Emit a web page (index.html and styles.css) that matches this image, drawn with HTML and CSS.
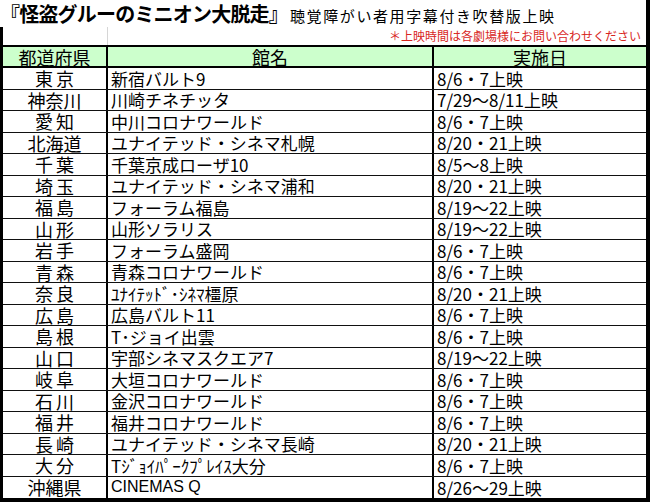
FILE: index.html
```html
<!DOCTYPE html>
<html lang="ja">
<head>
<meta charset="utf-8">
<link rel="stylesheet" href="styles.css">
</head>
<body>
<div class="sheet">
  <div class="title-row">
    <span class="title">『怪盗グルーのミニオン大脱走』</span><span class="subtitle">聴覚障がい者用字幕付き吹替版上映</span>
  </div>
  <div class="table">
    <div class="note-row">
      <div class="note-gap"></div>
      <div class="note">＊上映時間は各劇場様にお問い合わせください</div>
    </div>
    <div class="row head">
      <div class="cell c1">都道府県</div>
      <div class="cell c2 center">館名</div>
      <div class="cell c3 center">実施日</div>
    </div>
    <div class="body">
      <div class="row"><div class="cell c1 wide">東京</div><div class="cell c2">新宿バルト9</div><div class="cell c3">8/6・7上映</div></div>
      <div class="row"><div class="cell c1">神奈川</div><div class="cell c2">川崎チネチッタ</div><div class="cell c3">7/29～8/11上映</div></div>
      <div class="row"><div class="cell c1 wide">愛知</div><div class="cell c2">中川コロナワールド</div><div class="cell c3">8/6・7上映</div></div>
      <div class="row"><div class="cell c1">北海道</div><div class="cell c2">ユナイテッド・シネマ札幌</div><div class="cell c3">8/20・21上映</div></div>
      <div class="row"><div class="cell c1 wide">千葉</div><div class="cell c2">千葉京成ローザ10</div><div class="cell c3">8/5～8上映</div></div>
      <div class="row"><div class="cell c1 wide">埼玉</div><div class="cell c2">ユナイテッド・シネマ浦和</div><div class="cell c3">8/20・21上映</div></div>
      <div class="row"><div class="cell c1 wide">福島</div><div class="cell c2">フォーラム福島</div><div class="cell c3">8/19～22上映</div></div>
      <div class="row"><div class="cell c1 wide">山形</div><div class="cell c2">山形ソラリス</div><div class="cell c3">8/19～22上映</div></div>
      <div class="row"><div class="cell c1 wide">岩手</div><div class="cell c2">フォーラム盛岡</div><div class="cell c3">8/6・7上映</div></div>
      <div class="row"><div class="cell c1 wide">青森</div><div class="cell c2">青森コロナワールド</div><div class="cell c3">8/6・7上映</div></div>
      <div class="row"><div class="cell c1 wide">奈良</div><div class="cell c2">ﾕﾅｲﾃｯﾄﾞ･ｼﾈﾏ橿原</div><div class="cell c3">8/20・21上映</div></div>
      <div class="row"><div class="cell c1 wide">広島</div><div class="cell c2">広島バルト11</div><div class="cell c3">8/6・7上映</div></div>
      <div class="row"><div class="cell c1 wide">島根</div><div class="cell c2">T･ジョイ出雲</div><div class="cell c3">8/6・7上映</div></div>
      <div class="row"><div class="cell c1 wide">山口</div><div class="cell c2">宇部シネマスクエア7</div><div class="cell c3">8/19～22上映</div></div>
      <div class="row"><div class="cell c1 wide">岐阜</div><div class="cell c2">大垣コロナワールド</div><div class="cell c3">8/6・7上映</div></div>
      <div class="row"><div class="cell c1 wide">石川</div><div class="cell c2">金沢コロナワールド</div><div class="cell c3">8/6・7上映</div></div>
      <div class="row"><div class="cell c1 wide">福井</div><div class="cell c2">福井コロナワールド</div><div class="cell c3">8/6・7上映</div></div>
      <div class="row"><div class="cell c1 wide">長崎</div><div class="cell c2">ユナイテッド・シネマ長崎</div><div class="cell c3">8/20・21上映</div></div>
      <div class="row"><div class="cell c1 wide">大分</div><div class="cell c2">Tｼﾞｮｲﾊﾟｰｸﾌﾟﾚｲｽ大分</div><div class="cell c3">8/6・7上映</div></div>
      <div class="row last"><div class="cell c1">沖縄県</div><div class="cell c2 latin">CINEMAS Q</div><div class="cell c3">8/26～29上映</div></div>
    </div>
  </div>
</div>
</body>
</html>
```

FILE: styles.css
```css
html, body {
  margin: 0;
  padding: 0;
  background: #ffffff;
}

.sheet {
  width: 646px;
  height: 502px;
  border-right: 4px solid #000000;
  display: flex;
  flex-direction: column;
  font-family: "Noto Sans CJK JP", "Noto Sans", sans-serif;
  color: #000000;
  overflow: hidden;
}

.title-row {
  height: 27px;
  flex: 0 0 27px;
  display: flex;
  align-items: baseline;
  line-height: 27px;
  white-space: nowrap;
}

.title {
  font-size: 20px;
  font-weight: 700;
  letter-spacing: -0.8px;
}

.subtitle {
  font-size: 15px;
  letter-spacing: 1.6px;
  margin-left: 2px;
}

.table {
  flex: 1;
  display: flex;
  flex-direction: column;
  border-left: 3px solid #000000;
  border-bottom: 4px solid #000000;
  min-height: 0;
}

.note-row {
  flex: 0 0 18px;
  height: 18px;
  display: grid;
  grid-template-columns: 105px 1fr;
}

.note-gap {
  border-right: 1px solid #d6d6d6;
}

.note {
  font-size: 12px;
  line-height: 18px;
  color: #d8261e;
  text-align: right;
  padding-right: 5px;
  white-space: nowrap;
}

.row {
  display: grid;
  grid-template-columns: 105px 326px 1fr;
  border-bottom: 1px solid #111111;
  min-height: 0;
}

.row.last {
  border-bottom: none;
}

.head {
  flex: 0 0 19px;
  height: 19px;
  border-top: 2px solid #000000;
  border-bottom: 2px solid #000000;
  background: #ccffcc;
}

.head .cell {
  font-size: 18px;
}

.body {
  flex: 1;
  display: grid;
  grid-template-rows: repeat(20, 1fr);
  min-height: 0;
}

.cell {
  display: flex;
  align-items: center;
  line-height: 1;
  white-space: nowrap;
}

.c1 {
  justify-content: center;
  border-right: 2px solid #000000;
  font-size: 18px;
}

.c1.wide {
  letter-spacing: 3px;
  padding-left: 3px;
}

.c2 {
  border-right: 2px solid #000000;
  padding-left: 3px;
  font-size: 17px;
}

.c3 {
  padding-left: 3px;
  font-size: 17px;
}

.center {
  justify-content: center;
  padding-left: 0;
}

.latin {
  font-family: "Liberation Sans", "Noto Sans CJK JP", sans-serif;
  font-size: 16px;
}
```
